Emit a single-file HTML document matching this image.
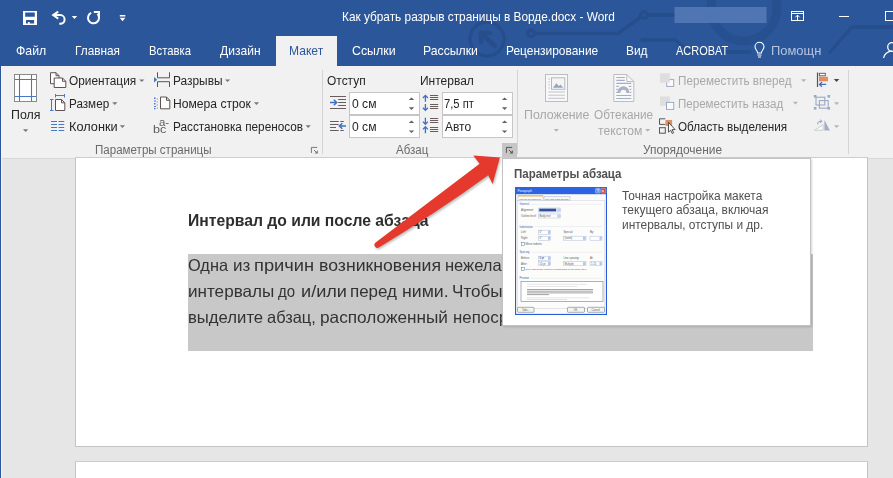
<!DOCTYPE html>
<html lang="ru">
<head>
<meta charset="utf-8">
<title>Как убрать разрыв страницы в Ворде.docx - Word</title>
<style>
html,body{margin:0;padding:0;background:#e6e6e6;}
body{width:893px;height:478px;overflow:hidden;position:relative;font-family:"Liberation Sans",sans-serif;}
#app{position:absolute;left:0;top:0;width:893px;height:478px;overflow:hidden;background:#e6e6e6;}
.abs{position:absolute;}
.t{position:absolute;white-space:nowrap;line-height:1;transform-origin:0 0;font-family:"Liberation Sans",sans-serif;z-index:5;}
#titlebar{position:absolute;left:0;top:0;width:893px;height:66px;background:#2b579a;}
#tab{position:absolute;left:276px;top:36px;width:61px;height:30px;background:#f1f1f1;}
#ribbon{position:absolute;left:0;top:66px;width:893px;height:92px;background:#f1f1f1;border-bottom:1px solid #d8d8d8;box-sizing:content-box;}
.sep{position:absolute;top:70px;width:1px;height:84px;background:#d4d4d4;}
.inp{position:absolute;width:69px;height:21px;background:#fff;border:1px solid #c6c6c6;}
#leftedge{position:absolute;left:0;top:66px;width:1px;height:412px;background:#2b579a;z-index:40;border-right:1px solid #f7f5f3;}
.page{position:absolute;left:75px;width:793px;background:#fff;border:1px solid #c3c3c3;border-top-color:#cdcdcd;box-sizing:border-box;}
#sel{position:absolute;left:188px;top:254px;width:625px;height:97px;background:#c8c8c8;}
.bl{position:absolute;white-space:nowrap;font-size:16.5px;line-height:1;color:#333;transform-origin:0 0;font-family:"Liberation Sans",sans-serif;}
.clip{position:absolute;left:0;top:0;width:502px;height:478px;overflow:hidden;}
#tip{position:absolute;left:502px;top:158px;width:309px;height:168px;background:#fff;z-index:20;box-shadow:1px 1px 2px rgba(60,70,100,.22);border:1px solid #c2c2c2;box-sizing:border-box;}
#icons,#arrow{position:absolute;left:0;top:0;}
#icons{z-index:6;}
#arrow{z-index:25;}
#thumb{position:absolute;left:515px;top:187px;z-index:30;}
</style>
</head>
<body>
<div id="app">

<div id="titlebar">
<svg class="abs" style="left:0;top:0" width="893" height="66" viewBox="0 0 893 66">
  <!-- subtle office background pattern -->
  <g fill="none" stroke="#264e8d" stroke-width="3.400" stroke-linecap="round">
    <circle cx="487" cy="39" r="17"/>
    <path d="M481 33 L495 46 M481 33 h9 M481 33 v9" stroke-width="4.500"/>
    <circle cx="531" cy="33.500" r="3.400"/>
    <path d="M535 33.500 H618 L641 17"/>
    <circle cx="644" cy="15" r="3.400"/>
    <path d="M648 15 H674"/>
    <path d="M642 40 H675 L690 52 H750"/>
    <path d="M830 52 L852 27 H893"/>
    <circle cx="744" cy="8" r="33" stroke-width="9" stroke="#26508f"/>
  </g>
  <!-- blurred account name -->
  <rect x="674.5" y="7" width="92" height="16" fill="#5075b3"/>
  <!-- save -->
  <g fill="#fff">
    <path fill-rule="evenodd" d="M23 11h14v14h-14z M25.2 12.6h9.6v4.2h-9.6z M26 20h8.1v3.500h-4.300v-1.400h-1.900v1.400h-1.900z"/>
  </g>
  <!-- undo -->
  <g fill="none" stroke="#fff" stroke-width="2">
    <path d="M58.2 11.6 L53.2 15.1 L58.2 18.6"/>
    <path d="M53.5 15.1 H60.3 a4.3 4.3 0 0 1 0 8.6 h-1"/>
  </g>
  <path d="M71.8 16.1h5.4l-2.7 2.8z" fill="#fff"/>
  <!-- redo/repeat -->
  <g fill="none" stroke="#fff" stroke-width="2">
    <path d="M91.200 12.800 A5.500 5.500 0 1 0 97.400 13.900"/>
    <path d="M93.800 12 H99 V17.200" stroke-width="1.900"/>
  </g>
  <!-- customize -->
  <path d="M119.8 15h5.5v1.4h-5.5z M119.7 17.8h5.7l-2.85 3.4z" fill="#fff"/>
  <!-- ribbon display options -->
  <g fill="none" stroke="#fff" stroke-width="1">
    <rect x="791.500" y="11.500" width="12" height="9"/>
    <path d="M791 13.500h13"/>
    <path d="M797.500 20v-5 M795.300 17.300 l2.200-2.200 2.200 2.200"/>
  </g>
  <!-- minimise / maximise -->
  <path d="M839 16h10v1h-10z" fill="#fff"/>
  <rect x="885.500" y="11.500" width="12" height="9" fill="none" stroke="#fff" stroke-width="1"/>
  <!-- light bulb -->
  <g fill="none" stroke="#fff" stroke-width="1.1">
    <path d="M757.6 53 c0-2.6-2.6-3.4-2.6-6.2 a4.5 4.5 0 0 1 9 0 c0 2.800-2.600 3.600-2.600 6.200 z"/>
    <path d="M757.500 55h4 M758 57h3"/>
  </g>
  <!-- person -->
  <g fill="none" stroke="#fff" stroke-width="1.3">
    <circle cx="892" cy="47" r="4.300"/>
    <path d="M883.6 58 a8.400 7.500 0 0 1 8.400-6.800"/>
  </g>
</svg>
<div id="tab"></div>
</div>

<div id="ribbon"></div>
<div class="sep" style="left:322px"></div>
<div class="sep" style="left:517px"></div>
<div class="sep" style="left:848px"></div>
<div class="inp" style="left:349px;top:92px"></div>
<div class="inp" style="left:349px;top:115px"></div>
<div class="inp" style="left:442px;top:92px"></div>
<div class="inp" style="left:442px;top:115px"></div>
<div class="abs" style="left:502px;top:143px;width:15px;height:15px;background:#c6c6c6"></div>

<!-- document -->
<div class="page" style="top:157px;height:290px"></div>
<div class="page" style="top:461px;height:40px"></div>
<div id="sel"></div>
<div class="clip"><span class="bl" style="left:188.16px;top:257.00px;transform:scaleX(0.9899)">Одна</span> <span class="bl" style="left:233.01px;top:257.00px;transform:scaleX(1.0305)">из</span> <span class="bl" style="left:254.42px;top:257.00px;transform:scaleX(1.1072)">причин</span> <span class="bl" style="left:318.86px;top:257.00px;transform:scaleX(1.0700)">возникновения</span> <span class="bl" style="left:444.95px;top:257.00px;transform:scaleX(1.0009)">нежела</span> <span class="bl" style="left:502.26px;top:257.00px;transform:scaleX(0.96)">тельных разрывов — абзацы, а точнее,</span></div>
<div class="clip"><span class="bl" style="left:187.61px;top:283.00px;transform:scaleX(1.0358)">интервалы</span> <span class="bl" style="left:277.97px;top:283.00px;transform:scaleX(0.9070)">до</span> <span class="bl" style="left:301.03px;top:283.00px;transform:scaleX(1.0987)">и/или</span> <span class="bl" style="left:350.11px;top:283.00px;transform:scaleX(1.0282)">перед</span> <span class="bl" style="left:401.56px;top:283.00px;transform:scaleX(1.0724)">ними.</span> <span class="bl" style="left:452.00px;top:283.00px;transform:scaleX(1.0366)">Чтобы</span> <span class="bl" style="left:501.30px;top:283.00px;transform:scaleX(0.96)"> проверить, не ваш ли это случай,</span></div>
<div class="clip"><span class="bl" style="left:187.64px;top:308.70px;transform:scaleX(1.0118)">выделите</span> <span class="bl" style="left:267.25px;top:308.70px;transform:scaleX(0.9947)">абзац,</span> <span class="bl" style="left:320.36px;top:308.70px;transform:scaleX(1.0432)">расположенный</span> <span class="bl" style="left:452.52px;top:308.70px;transform:scaleX(1.0209)">непос</span> <span class="bl" style="left:499.24px;top:308.70px;transform:scaleX(0.96)">редственно перед лишним разрывом.</span></div>

<span class="t" style="left:342.26px;top:10.90px;font-size:12.6px;color:#fff;transform:scaleX(0.9402)">Как убрать разрыв страницы в Ворде.docx - Word</span>
<span class="t" style="left:16.37px;top:44.90px;font-size:12.6px;color:#fff;transform:scaleX(0.9778)">Файл</span>
<span class="t" style="left:75.46px;top:44.90px;font-size:12.6px;color:#fff;transform:scaleX(0.9391)">Главная</span>
<span class="t" style="left:148.70px;top:44.90px;font-size:12.6px;color:#fff;transform:scaleX(0.8984)">Вставка</span>
<span class="t" style="left:219.80px;top:44.90px;font-size:12.6px;color:#fff;transform:scaleX(0.9590)">Дизайн</span>
<span class="t" style="left:288.84px;top:44.90px;font-size:12.6px;color:#2b579a;transform:scaleX(0.9594)">Макет</span>
<span class="t" style="left:351.56px;top:44.90px;font-size:12.6px;color:#fff;transform:scaleX(0.9825)">Ссылки</span>
<span class="t" style="left:423.33px;top:44.90px;font-size:12.6px;color:#fff;transform:scaleX(0.9717)">Рассылки</span>
<span class="t" style="left:506.45px;top:44.90px;font-size:12.6px;color:#fff;transform:scaleX(0.9483)">Рецензирование</span>
<span class="t" style="left:626.06px;top:44.90px;font-size:12.6px;color:#fff;transform:scaleX(0.9442)">Вид</span>
<span class="t" style="left:676.00px;top:44.90px;font-size:12.6px;color:#fff;transform:scaleX(0.8703)">ACROBAT</span>
<span class="t" style="left:770.57px;top:44.90px;font-size:12.6px;color:#b4c4df;transform:scaleX(1.0265)">Помощн</span>
<span class="t" style="left:11.09px;top:109.30px;font-size:12.3px;color:#262626;transform:scaleX(1.0055)">Поля</span>
<span class="t" style="left:69.22px;top:74.90px;font-size:12.3px;color:#262626;transform:scaleX(0.9620)">Ориентация</span>
<span class="t" style="left:68.75px;top:97.70px;font-size:12.3px;color:#262626;transform:scaleX(0.9497)">Размер</span>
<span class="t" style="left:68.66px;top:120.70px;font-size:12.3px;color:#262626;transform:scaleX(1.0356)">Колонки</span>
<span class="t" style="left:172.73px;top:74.90px;font-size:12.3px;color:#262626;transform:scaleX(0.9685)">Разрывы</span>
<span class="t" style="left:172.71px;top:97.70px;font-size:12.3px;color:#262626;transform:scaleX(0.9859)">Номера строк</span>
<span class="t" style="left:172.74px;top:120.70px;font-size:12.3px;color:#262626;transform:scaleX(0.9579)">Расстановка переносов</span>
<span class="t" style="left:94.86px;top:144.30px;font-size:12.3px;color:#6a6a6a;transform:scaleX(0.9402)">Параметры страницы</span>
<span class="t" style="left:327.01px;top:74.90px;font-size:12.3px;color:#262626;transform:scaleX(0.9714)">Отступ</span>
<span class="t" style="left:419.52px;top:74.90px;font-size:12.3px;color:#262626;transform:scaleX(0.9757)">Интервал</span>
<span class="t" style="left:352.01px;top:97.70px;font-size:12.3px;color:#262626;transform:scaleX(0.9872)">0 см</span>
<span class="t" style="left:352.01px;top:120.70px;font-size:12.3px;color:#262626;transform:scaleX(0.9872)">0 см</span>
<span class="t" style="left:444.41px;top:97.70px;font-size:12.3px;color:#262626;transform:scaleX(0.9134)">7,5 пт</span>
<span class="t" style="left:445.10px;top:120.70px;font-size:12.3px;color:#262626;transform:scaleX(0.9752)">Авто</span>
<span class="t" style="left:396.40px;top:144.30px;font-size:12.3px;color:#6a6a6a;transform:scaleX(0.9343)">Абзац</span>
<span class="t" style="left:523.79px;top:109.10px;font-size:12.3px;color:#a8a8a8;transform:scaleX(1.0063)">Положение</span>
<span class="t" style="left:594.12px;top:109.10px;font-size:12.3px;color:#a8a8a8;transform:scaleX(0.9547)">Обтекание</span>
<span class="t" style="left:598.25px;top:124.80px;font-size:12.3px;color:#a8a8a8;transform:scaleX(0.9897)">текстом</span>
<span class="t" style="left:677.55px;top:74.90px;font-size:12.3px;color:#a8a8a8;transform:scaleX(0.9505)">Переместить вперед</span>
<span class="t" style="left:677.56px;top:97.70px;font-size:12.3px;color:#a8a8a8;transform:scaleX(0.9409)">Переместить назад</span>
<span class="t" style="left:678.03px;top:120.70px;font-size:12.3px;color:#262626;transform:scaleX(0.9489)">Область выделения</span>
<span class="t" style="left:642.72px;top:144.30px;font-size:12.3px;color:#6a6a6a;transform:scaleX(0.9689)">Упорядочение</span>
<span class="t" style="left:153.10px;top:123.70px;font-size:10.5px;color:#5c5c5c;transform:scaleX(1.2000)">bc</span>
<span class="t" style="left:159.45px;top:116.60px;font-size:10.5px;color:#5c5c5c;transform:scaleX(1.0909)">a-</span>
<span class="t" style="left:187.75px;top:211.60px;font-size:16.5px;color:#2e2e2e;transform:scaleX(0.9517);font-weight:700">Интервал до или после абзаца</span>
<span class="t" style="left:513.90px;top:167.90px;font-size:12.3px;color:#505050;transform:scaleX(0.9357);font-weight:700;z-index:30">Параметры абзаца</span>
<span class="t" style="left:622.36px;top:189.50px;font-size:12.3px;color:#505050;transform:scaleX(0.9696);z-index:30">Точная настройка макета</span>
<span class="t" style="left:622.36px;top:204.00px;font-size:12.3px;color:#505050;transform:scaleX(0.9752);z-index:30">текущего абзаца, включая</span>
<span class="t" style="left:621.87px;top:218.50px;font-size:12.3px;color:#505050;transform:scaleX(0.9697);z-index:30">интервалы, отступы и др.</span>

<svg id="icons" width="893" height="478" viewBox="0 0 893 478">
<g shape-rendering="auto">
<!-- Поля icon -->
<rect x="14.500" y="74.500" width="22" height="27" fill="#fff" stroke="#8a8a8a"/>
<path d="M19.500 75v26 M31.500 75v26 M15 79.500h21 M15 96.500h21" stroke="#4a76c6" stroke-width="1.100" fill="none"/>
<path d="M23 129.300h5.200l-2.600 2.800z" fill="#777"/>
<!-- Ориентация -->
<g fill="#fff" stroke="#5e5252" stroke-width="1">
<path d="M50.500 72.700h5.500l3 3v8h-8.500z"/>
<path d="M56 72.700v3h3" fill="none"/>
<path d="M54.200 78h8.300l3.300 3.300v6.200h-11.600z"/>
<path d="M62.500 78v3.300h3.300" fill="none"/>
</g>
<!-- Размер -->
<g fill="none" stroke="#4a76c6" stroke-width="1">
<path d="M51.500 99v11.500 M50 99.500h3.500 M50 110.500h3.500"/>
<path d="M55 95.500h10 M55.500 94v3.500 M64.500 94v3.500"/>
</g>
<path d="M55.500 99.500h6l3.300 3.300v7.700h-9.300z M61.500 99.500v3.300h3.300" fill="#fff" stroke="#5e5252"/>
<!-- Колонки -->
<path d="M51 121.500h6 M51 124.500h6 M51 127.500h6 M51 130.500h6 M58.500 121.500h5.700 M58.500 124.500h5.700 M58.500 127.500h5.700 M58.500 130.500h5.700" stroke="#4a76c6" stroke-width="1.100" fill="none"/>
<!-- dropdown arrows col1 -->
<g fill="#777">
<path d="M139.200 79.400h5.200l-2.600 2.700z"/>
<path d="M112.200 102.300h5.200l-2.600 2.700z"/>
<path d="M119.800 125.200h5.200l-2.600 2.700z"/>
<path d="M225 79.400h5.200l-2.600 2.700z"/>
<path d="M253.900 102.300h5.200l-2.600 2.700z"/>
<path d="M305.600 125.200h5.200l-2.600 2.700z"/>
</g>
<!-- Разрывы -->
<path d="M154 77l3.200 2.700l-3.200 2.700z" fill="#4a76c6"/>
<path d="M157.500 72.300v5.500h12v-5.500 M157.500 87v-5.300h12v5.300" fill="none" stroke="#5e5252"/>
<!-- Номера строк -->
<path d="M160.500 97h6l3.300 3.300v8.500h-9.300z M166.500 97v3.300h3.300" fill="#fff" stroke="#5e5252"/>
<path d="M154 97.500h1.500v1.500h-1.500z M154 100.500h2v1h-2z M154 103h1.500v1.500h-1.500z M154 106h2v1h-2z M154 108h1.500v1.200h-1.500z M156.800 98.500h.9v.9h-.9z M156.800 101.500h.9v.9h-.9z M156.800 104.500h.9v.9h-.9z M156.800 107.500h.9v.9h-.9z" fill="#4a76c6"/>
<!-- launcher 1 -->
<path d="M311.400 153v-5.600h5.800" fill="none" stroke="#777" stroke-width="1"/>
<path d="M313.900 149.900l2.600 2.600" fill="none" stroke="#777" stroke-width="1"/><path d="M317.900 150.200v3.400h-3.400z" fill="#777"/>
<!-- launcher 2 (hover) -->
<path d="M506.400 152.900v-5.500h5.700" fill="none" stroke="#555" stroke-width="1"/>
<path d="M508.900 149.900l2.600 2.600" fill="none" stroke="#555" stroke-width="1"/><path d="M512.900 150.200v3.400h-3.400z" fill="#555"/>
<!-- indent left -->
<path d="M330 96.500h16 M338.200 99.500h7.800 M338.200 102.500h7.800 M338.200 105.500h7.800 M330 108.500h16" stroke="#6a5c5c" stroke-width="1" fill="none"/>
<path d="M330 102.500h6 M333.800 99.800l2.900 2.700l-2.900 2.700" stroke="#3f6fc4" stroke-width="1.500" fill="none"/>
<!-- indent right -->
<path d="M330 121.500h8.700 M330 124.500h8.700 M330 127.500h6 M330 130.500h8.700 M340.300 121.500h3.500 M340.300 130.500h3.500" stroke="#6a5c5c" stroke-width="1" fill="none"/>
<path d="M346 126h-6.500 M342.300 123.300l-2.900 2.700l2.900 2.700" stroke="#3f6fc4" stroke-width="1.500" fill="none"/>
<!-- spacing before -->
<g stroke="#3f6fc4" stroke-width="1.300" fill="none">
<path d="M425.400 101.800v-6.200 M422.900 98l2.500-2.600l2.500 2.600"/>
<path d="M425.400 104v6.200 M422.900 107.800l2.500 2.600l2.500-2.600"/>
<path d="M425.400 117.800v6.200 M422.900 121.600l2.500 2.600l2.500-2.600"/>
<path d="M425.400 133.200v-6.200 M422.900 129.400l2.500-2.600l2.500 2.600"/>
</g>
<path d="M430 95.500h8.200 M430 97.500h8.200 M430 99.500h8.200 M430 104.500h8.200 M430 106.500h8.200 M430 108.500h8.200 M430 118.500h8.200 M430 120.500h8.200 M430 122.500h8.200 M430 127.500h8.200 M430 129.500h8.200 M430 131.500h8.200" stroke="#6a5c5c" stroke-width="1" fill="none"/>
<!-- spinners -->
<g fill="#6a5f5f">
<path d="M408.800 100.100h5.400l-2.700-2.600z M408.800 107.300h5.400l-2.700 2.600z M408.800 123h5.400l-2.700-2.600z M408.800 130.400h5.400l-2.700 2.600z"/>
<path d="M501.900 100.100h5.400l-2.700-2.600z M501.900 107.300h5.400l-2.700 2.600z M501.900 123h5.400l-2.700-2.600z M501.900 130.400h5.400l-2.700 2.600z"/>
</g>
<!-- Положение icon (disabled) -->
<rect x="545.500" y="74.500" width="22" height="27" fill="#f8f8f8" stroke="#bcbcc4"/>
<rect x="551.500" y="77.800" width="13.300" height="11.500" fill="#f4f4f6" stroke="#b4b8c4"/>
<path d="M553 87.800l3.400-4.600l2.400 3l1.500-1.700l3 3.300z" fill="#95a2bd"/>
<path d="M548.300 79h1.700 M548.300 82h1.700 M548.300 85h1.700 M548.300 88h1.700 M548.300 92h16.600 M548.300 95.200h16.600 M548.300 98.300h16.600" stroke="#c4c4c8" stroke-width="1"/>
<path d="M553.700 129h5.200l-2.600 2.700z" fill="#b4b4b4"/>
<!-- Обтекание icon (disabled) -->
<path d="M613.800 74.500h13l7 7v20h-20z" fill="#f8f8f8" stroke="#bcbcc4"/>
<path d="M626.800 74.500v7h7" fill="none" stroke="#bcbcc4"/>
<path d="M616.300 77.500h8.500 M616.300 80.400h8.500 M616.300 83.400h15 M616.300 95.500h15 M616.300 98.500h15 M616.300 86.400h2.500 M628.800 86.400h2.500 M616.300 89.400h1.500 M629.800 89.400h1.500 M616.300 92.400h1.500 M629.800 92.400h1.500" stroke="#a3aec6" stroke-width="1.100"/>
<path d="M617.200 93a6.200 6.800 0 0 1 12.400 0h-3.200a3 3.300 0 0 0 -6 0z" fill="#a9b1c6"/>
<path d="M645.100 129h5.200l-2.600 2.700z" fill="#b4b4b4"/>
<!-- bring forward -->
<rect x="666.700" y="79.600" width="7" height="6.800" fill="#fdfdfd" stroke="#9aa9c4" stroke-width="1"/>
<rect x="660" y="73.300" width="9.800" height="9.500" fill="#dedede"/>
<!-- send backward -->
<rect x="660" y="96.400" width="9.800" height="9.400" fill="#dedede"/>
<rect x="666.500" y="102.400" width="7.200" height="7" fill="#fdfdfd" stroke="#9aa9c4" stroke-width="1"/>
<!-- selection pane -->
<path d="M665.300 118.800h-5.800v5.600h5.800" fill="none" stroke="#5e5252"/>
<rect x="659.500" y="127.700" width="5.800" height="5.500" fill="none" stroke="#5e5252"/>
<rect x="665.500" y="120" width="6.600" height="6" fill="#e38d5c"/>
<path d="M668.500 122.400v9.800l2.200-2.100l1.500 3.400l1.400-.6l-1.500-3.300h3z" fill="#fff" stroke="#4a4040" stroke-width=".9" stroke-linejoin="round"/>
<!-- disabled dropdown arrows -->
<g fill="#b4b4b4">
<path d="M801 79.300h5.200l-2.600 2.700z"/>
<path d="M792.800 101.800h5.200l-2.600 2.700z"/>
<path d="M834 102.300h5.200l-2.600 2.700z"/>
<path d="M834 125.300h5.200l-2.600 2.700z"/>
</g>
<path d="M833.800 79h5.500l-2.750 2.900z" fill="#4f4545"/>
<!-- align -->
<path d="M817.500 72.500v14.500" stroke="#5e5252" stroke-width="1.200"/>
<rect x="819.300" y="73.300" width="6" height="2.500" fill="#fff" stroke="#5e5252" stroke-width=".9"/>
<rect x="819" y="76.800" width="9" height="4.500" fill="#e38d5c"/>
<path d="M826.200 84.400h-6 M822 82.100l-2.500 2.300l2.500 2.300" fill="none" stroke="#3f6fc4" stroke-width="1.300"/>
<!-- group (disabled) -->
<g fill="#9aa9c4">
<rect x="813.800" y="95" width="2.600" height="2.600"/><rect x="827.500" y="95" width="2.600" height="2.600"/>
<rect x="813.800" y="107" width="2.600" height="2.600"/><rect x="827.500" y="107" width="2.600" height="2.600"/>
</g>
<g fill="none" stroke="#9aa9c4" stroke-width="1.100">
<rect x="816" y="97.200" width="8.800" height="7.800"/>
<rect x="819.400" y="100.600" width="8.800" height="7.600"/>
</g>
<!-- rotate (disabled) -->
<path d="M814.500 130.300h8.600v-5.600z" fill="#fafafa" stroke="#c8c8c8" stroke-width=".9"/>
<path d="M824.400 120v10.500h5.500z" fill="#a3aec6"/>
<path d="M817.600 124.200a3.200 3.200 0 0 1 3.200-3 M820 119.600l1.800 1.600l-1.800 1.600" fill="none" stroke="#a3aec6" stroke-width="1.100"/>
</g>

</svg>

<div id="tip"></div>
<svg id="thumb" width="92" height="128" viewBox="0 0 92 128">
<g font-family="'Liberation Sans',sans-serif" font-size="2.700" fill="#5a5a5a">
<rect x="0" y="0" width="92" height="128" fill="#fbfbf9"/>
<rect x="0.500" y="0.500" width="91" height="127" fill="none" stroke="#2a5bd8" stroke-width="1.200"/>
<rect x="0" y="0" width="92" height="7.200" fill="#2c63e2"/>
<text x="2.500" y="5.200" fill="#e8eefc" font-size="3.100">Paragraph</text>
<rect x="80.500" y="1.300" width="4.600" height="4.800" rx="1" fill="#5b8df0" stroke="#dfe8fb" stroke-width=".4"/>
<text x="81.700" y="5.200" fill="#fff" font-size="3.800" font-weight="700">?</text>
<rect x="86" y="1.300" width="4.800" height="4.800" rx="1" fill="#dc4a2c" stroke="#f6d9d0" stroke-width=".4"/>
<text x="87.100" y="5.100" fill="#fff" font-size="3.600" font-weight="700">x</text>
<!-- tabs -->
<rect x="2.500" y="13.400" width="87" height="108" fill="#fcfcfa" stroke="#c9cfda" stroke-width=".5"/>
<rect x="3" y="8.800" width="25" height="5" fill="#fff" stroke="#a9b3c6" stroke-width=".5"/>
<rect x="3" y="8.500" width="25" height=".9" fill="#e9a23b"/>
<rect x="29" y="9.600" width="26" height="4" fill="#f7f7f3" stroke="#a9b3c6" stroke-width=".5"/>
<text x="4" y="12.500" font-size="2.400">Indents and Spacing</text>
<text x="30" y="12.700" font-size="2.400">Line and Page Breaks</text>
<!-- general -->
<text x="4.500" y="18.300" fill="#3a5fc0">General</text>
<path d="M15 17.300h72" stroke="#d8dce6" stroke-width=".4"/>
<text x="6" y="23.800">Alignment:</text>
<rect x="23.500" y="21" width="22" height="4" fill="#fff" stroke="#aebcd8" stroke-width=".5"/>
<rect x="24.200" y="21.600" width="17" height="2.800" fill="#2f4f9f"/>
<rect x="42.200" y="21.400" width="3" height="3.200" fill="#bdd0f6"/>
<text x="6" y="29.800">Outline level:</text>
<rect x="23.500" y="27" width="22" height="4" fill="#fff" stroke="#aebcd8" stroke-width=".5"/>
<text x="24.500" y="30">Body text</text>
<rect x="42.200" y="27.400" width="3" height="3.200" fill="#bdd0f6"/>
<!-- indentation -->
<text x="4.500" y="40.500" fill="#3a5fc0">Indentation</text>
<path d="M20 39.500h67" stroke="#d8dce6" stroke-width=".4"/>
<text x="6" y="46">Left:</text>
<rect x="23.500" y="43.200" width="12" height="4" fill="#fff" stroke="#aebcd8" stroke-width=".5"/>
<text x="24.500" y="46.300">0"</text>
<rect x="33" y="43.600" width="2.200" height="3.200" fill="#b3c6ee"/>
<text x="48.500" y="46">Special:</text>
<text x="75" y="46">By:</text>
<text x="6" y="52">Right:</text>
<rect x="23.500" y="49.200" width="12" height="4" fill="#fff" stroke="#aebcd8" stroke-width=".5"/>
<text x="24.500" y="52.300">0"</text>
<rect x="33" y="49.600" width="2.200" height="3.200" fill="#b3c6ee"/>
<rect x="48.500" y="49.200" width="22.500" height="4" fill="#fff" stroke="#aebcd8" stroke-width=".5"/>
<text x="49.500" y="52.300">(none)</text>
<rect x="68" y="49.600" width="2.600" height="3.200" fill="#b3c6ee"/>
<rect x="75" y="49.200" width="12" height="4" fill="#fff" stroke="#aebcd8" stroke-width=".5"/>
<rect x="84.500" y="49.600" width="2.200" height="3.200" fill="#b3c6ee"/>
<rect x="6.500" y="55.300" width="3" height="3" fill="#fff" stroke="#5a6f9c" stroke-width=".5"/>
<text x="10.500" y="58">Mirror indents</text>
<!-- spacing -->
<text x="4.500" y="66.300" fill="#3a5fc0">Spacing</text>
<path d="M16 65.300h71" stroke="#d8dce6" stroke-width=".4"/>
<text x="6" y="72">Before:</text>
<rect x="23.500" y="69.200" width="12" height="4" fill="#fff" stroke="#aebcd8" stroke-width=".5"/>
<text x="24.500" y="72.300" fill="#111">0 pt</text>
<rect x="33" y="69.600" width="2.200" height="3.200" fill="#b3c6ee"/>
<text x="48.500" y="72">Line spacing:</text>
<text x="75" y="72">At:</text>
<text x="6" y="77.500">After:</text>
<rect x="23.500" y="74.700" width="12" height="4" fill="#fff" stroke="#aebcd8" stroke-width=".5"/>
<text x="24.500" y="77.800">10 pt</text>
<rect x="33" y="75.100" width="2.200" height="3.200" fill="#b3c6ee"/>
<rect x="48.500" y="74.700" width="22.500" height="4" fill="#fff" stroke="#aebcd8" stroke-width=".5"/>
<text x="49.500" y="77.800">Multiple</text>
<rect x="68" y="75.100" width="2.600" height="3.200" fill="#b3c6ee"/>
<rect x="75" y="74.700" width="12" height="4" fill="#fff" stroke="#aebcd8" stroke-width=".5"/>
<text x="76" y="77.800">1.15</text>
<rect x="84.500" y="75.100" width="2.200" height="3.200" fill="#b3c6ee"/>
<rect x="6.500" y="80.300" width="3" height="3" fill="#fff" stroke="#5a6f9c" stroke-width=".5"/>
<text x="10.500" y="83" font-size="2.500">Don't add space between paragraphs of the same style</text>
<!-- preview -->
<text x="4.500" y="92.300" fill="#3a5fc0">Preview</text>
<path d="M16 91.300h71" stroke="#d8dce6" stroke-width=".4"/>
<rect x="6" y="94.500" width="82" height="20" fill="#fff" stroke="#8a8f99" stroke-width=".7"/>
<path d="M12 97.300h60 M12 99.500h50 M12 110.800h62 M12 112.500h40" stroke="#d2d2d2" stroke-width=".6"/>
<path d="M12 102.500h66 M12 104.200h66 M12 105.900h66 M12 107.600h22" stroke="#8a8a8a" stroke-width=".8"/>
<!-- buttons -->
<rect x="2.500" y="120.300" width="16.500" height="5" rx=".8" fill="#f6f6f1" stroke="#47608f" stroke-width=".5"/>
<text x="7" y="124">Tabs...</text>
<rect x="52.500" y="120.300" width="17" height="5" rx=".8" fill="#f6f6f1" stroke="#47608f" stroke-width=".5"/>
<text x="58.500" y="124">OK</text>
<rect x="72.500" y="120.300" width="17" height="5" rx=".8" fill="#f6f6f1" stroke="#47608f" stroke-width=".5"/>
<text x="76.500" y="124">Cancel</text>
</g>

</svg>

<svg id="arrow" width="893" height="478" viewBox="0 0 893 478">
  <defs><filter id="sh" x="-10%" y="-10%" width="125%" height="125%"><feGaussianBlur stdDeviation="0.8"/></filter></defs>
  <path d="M375.600 242.600 L479.600 163.800 L473.300 155.500 L499.900 157.500 L492.600 183.900 L488.200 175.300 Q435.300 213.700 379.200 247.200 A2.800 2.800 0 0 1 375.600 242.600z" fill="#222" opacity=".3" filter="url(#sh)" transform="translate(1,1.6)"/>
  <path d="M375.600 242.600 L479.600 163.800 L473.300 155.500 L499.900 157.500 L492.600 183.900 L488.200 175.300 Q435.300 213.700 379.200 247.200 A2.800 2.800 0 0 1 375.600 242.600z" fill="#e5392d"/>
</svg>

<div id="leftedge"></div>
</div>
</body>
</html>
